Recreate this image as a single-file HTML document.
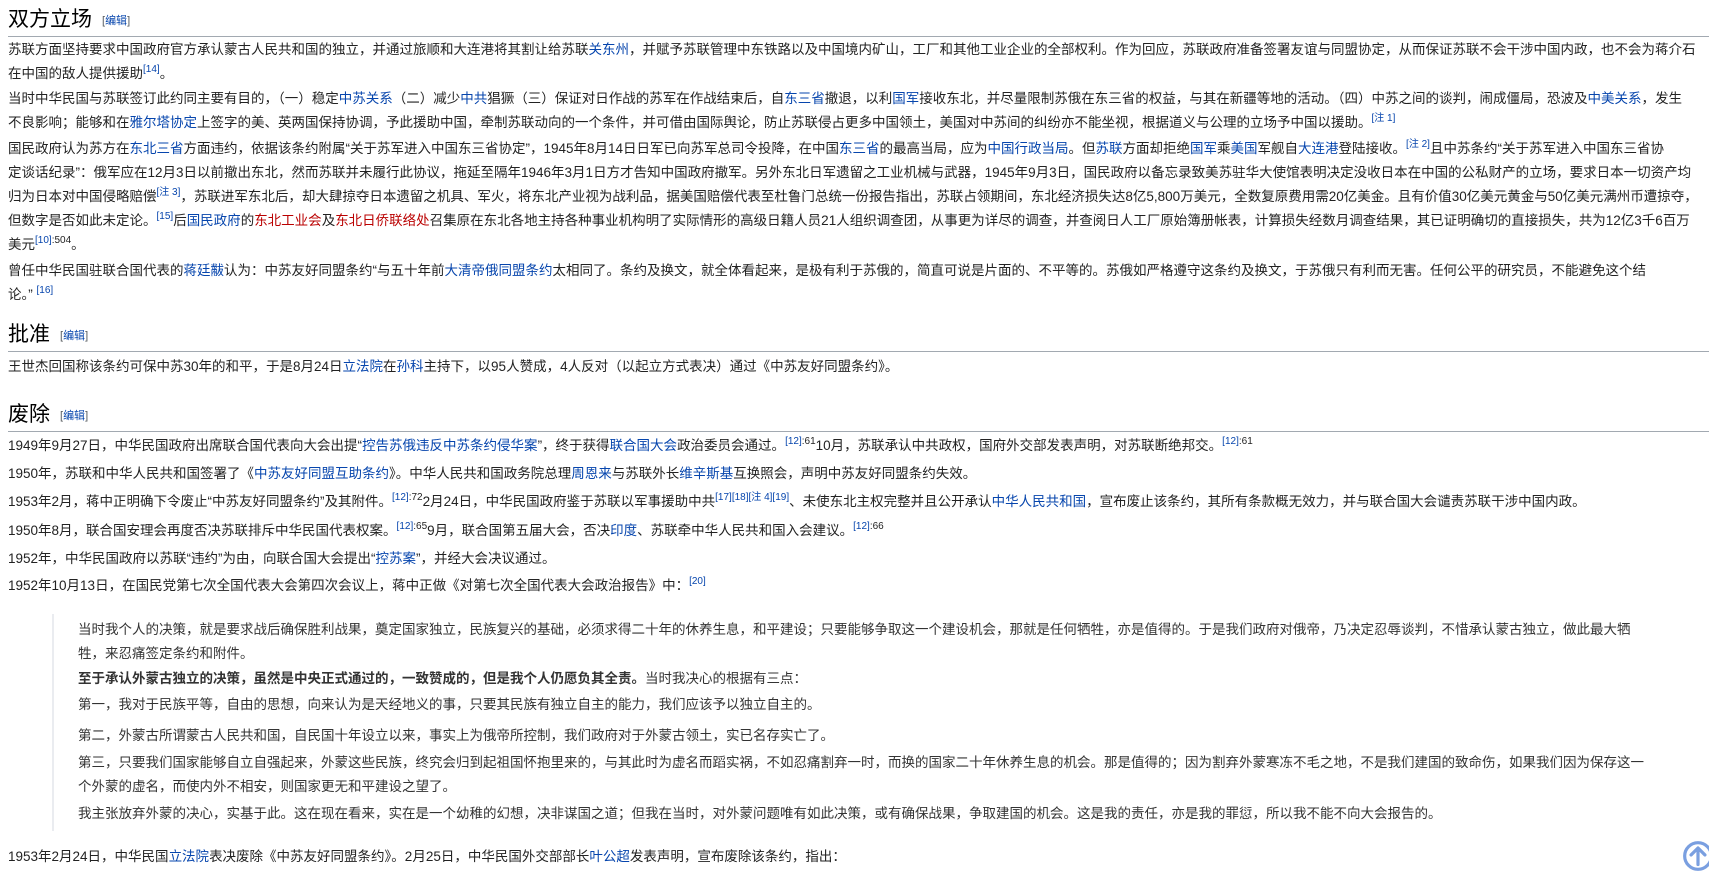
<!DOCTYPE html>
<html><head><meta charset="utf-8">
<style>
html,body{margin:0;padding:0;background:#fff;}
body{width:1709px;height:879px;position:relative;overflow:hidden;font-family:"Liberation Sans","Noto Sans CJK SC",sans-serif;font-size:13.5px;color:#222;}
.l{position:absolute;left:8px;height:24px;line-height:24px;white-space:nowrap;}
.q{left:78px;color:#333;}
a{color:#0645ad;text-decoration:none;}
.r{color:#ba0000;}
sup{font-size:10px;line-height:0;vertical-align:6px;color:#0645ad;}
.h{position:absolute;left:8px;font-size:21px;line-height:26px;color:#000;white-space:nowrap;}
.h .e{font-size:11px;color:#54595d;margin-left:10px;vertical-align:2px;}
.h .e a{color:#0645ad;}
.hr{position:absolute;left:8px;width:1701px;height:1px;background:#a2a9b1;}
.bq{position:absolute;left:52px;top:614px;width:2px;height:217px;background:#eaecf0;}
</style></head><body>

<div class="h" style="top:7px">双方立场<span class="e">[<a>编辑</a>]</span></div>
<div class="hr" style="top:36px"></div>

<div class="l" style="top:38px">苏联方面坚持要求中国政府官方承认蒙古人民共和国的独立，并通过旅顺和大连港将其割让给苏联<a>关东州</a>，并赋予苏联管理中东铁路以及中国境内矿山，工厂和其他工业企业的全部权利。作为回应，苏联政府准备签署友谊与同盟协定，从而保证苏联不会干涉中国内政，也不会为蒋介石</div>
<div class="l" style="top:62px">在中国的敌人提供援助<sup>[14]</sup>。</div>

<div class="l" style="top:87px">当时中华民国与苏联签订此约同主要有目的，（一）稳定<a>中苏关系</a>（二）减少<a>中共</a>猖獗（三）保证对日作战的苏军在作战结束后，自<a>东三省</a>撤退，以利<a>国军</a>接收东北，并尽量限制苏俄在东三省的权益，与其在新疆等地的活动。（四）中苏之间的谈判，闹成僵局，恐波及<a>中美关系</a>，发生</div>
<div class="l" style="top:111px">不良影响；能够和在<a>雅尔塔协定</a>上签字的美、英两国保持协调，予此援助中国，牵制苏联动向的一个条件，并可借由国际舆论，防止苏联侵占更多中国领土，美国对中苏间的纠纷亦不能坐视，根据道义与公理的立场予中国以援助。<sup>[注 1]</sup></div>

<div class="l" style="top:137px">国民政府认为苏方在<a>东北三省</a>方面违约，依据该条约附属“关于苏军进入中国东三省协定”，1945年8月14日日军已向苏军总司令投降，在中国<a>东三省</a>的最高当局，应为<a>中国行政当局</a>。但<a>苏联</a>方面却拒绝<a>国军</a>乘<a>美国</a>军舰自<a>大连港</a>登陆接收。<sup>[注 2]</sup>且中苏条约“关于苏军进入中国东三省协</div>
<div class="l" style="top:161px">定谈话纪录”：俄军应在12月3日以前撤出东北，然而苏联并未履行此协议，拖延至隔年1946年3月1日方才告知中国政府撤军。另外东北日军遗留之工业机械与武器，1945年9月3日，国民政府以备忘录致美苏驻华大使馆表明决定没收日本在中国的公私财产的立场，要求日本一切资产均</div>
<div class="l" style="top:185px">归为日本对中国侵略赔偿<sup>[注 3]</sup>，苏联进军东北后，却大肆掠夺日本遗留之机具、军火，将东北产业视为战利品，据美国赔偿代表至杜鲁门总统一份报告指出，苏联占领期间，东北经济损失达8亿5,800万美元，全数复原费用需20亿美金。且有价值30亿美元黄金与50亿美元满州币遭掠夺，</div>
<div class="l" style="top:209px">但数字是否如此未定论。<sup>[15]</sup>后<a>国民政府</a>的<a class="r">东北工业会</a>及<a class="r">东北日侨联络处</a>召集原在东北各地主持各种事业机构明了实际情形的高级日籍人员21人组织调查团，从事更为详尽的调查，并查阅日人工厂原始簿册帐表，计算损失经数月调查结果，其已证明确切的直接损失，共为12亿3千6百万</div>
<div class="l" style="top:233px">美元<sup>[10]<span style="color:#222">:504</span></sup>。</div>

<div class="l" style="top:259px">曾任中华民国驻联合国代表的<a>蒋廷黻</a>认为：中苏友好同盟条约“与五十年前<a>大清帝俄同盟条约</a>太相同了。条约及换文，就全体看起来，是极有利于苏俄的，简直可说是片面的、不平等的。苏俄如严格遵守这条约及换文，于苏俄只有利而无害。任何公平的研究员，不能避免这个结</div>
<div class="l" style="top:283px">论。” <sup>[16]</sup></div>

<div class="h" style="top:322px">批准<span class="e">[<a>编辑</a>]</span></div>
<div class="hr" style="top:351px"></div>
<div class="l" style="top:355px">王世杰回国称该条约可保中苏30年的和平，于是8月24日<a>立法院</a>在<a>孙科</a>主持下，以95人赞成，4人反对（以起立方式表决）通过《中苏友好同盟条约》。</div>

<div class="h" style="top:402px">废除<span class="e">[<a>编辑</a>]</span></div>
<div class="hr" style="top:431px"></div>
<div class="l" style="top:434px">1949年9月27日，中华民国政府出席联合国代表向大会出提“<a>控告苏俄违反中苏条约侵华案</a>”，终于获得<a>联合国大会</a>政治委员会通过。<sup>[12]<span style="color:#222">:61</span></sup>10月，苏联承认中共政权，国府外交部发表声明，对苏联断绝邦交。<sup>[12]<span style="color:#222">:61</span></sup></div>
<div class="l" style="top:462px">1950年，苏联和中华人民共和国签署了《<a>中苏友好同盟互助条约</a>》。中华人民共和国政务院总理<a>周恩来</a>与苏联外长<a>维辛斯基</a>互换照会，声明中苏友好同盟条约失效。</div>
<div class="l" style="top:490px">1953年2月，蒋中正明确下令废止“中苏友好同盟条约”及其附件。<sup>[12]<span style="color:#222">:72</span></sup>2月24日，中华民国政府鉴于苏联以军事援助中共<sup>[17][18][注 4][19]</sup>、未使东北主权完整并且公开承认<a>中华人民共和国</a>，宣布废止该条约，其所有条款概无效力，并与联合国大会谴责苏联干涉中国内政。</div>
<div class="l" style="top:519px">1950年8月，联合国安理会再度否决苏联排斥中华民国代表权案。<sup>[12]<span style="color:#222">:65</span></sup>9月，联合国第五届大会，否决<a>印度</a>、苏联牵中华人民共和国入会建议。<sup>[12]<span style="color:#222">:66</span></sup></div>
<div class="l" style="top:547px">1952年，中华民国政府以苏联“违约”为由，向联合国大会提出“<a>控苏案</a>”，并经大会决议通过。</div>
<div class="l" style="top:574px">1952年10月13日，在国民党第七次全国代表大会第四次会议上，蒋中正做《对第七次全国代表大会政治报告》中：<sup>[20]</sup></div>

<div class="bq"></div>
<div class="l q" style="top:618px">当时我个人的决策，就是要求战后确保胜利战果，奠定国家独立，民族复兴的基础，必须求得二十年的休养生息，和平建设；只要能够争取这一个建设机会，那就是任何牺牲，亦是值得的。于是我们政府对俄帝，乃决定忍辱谈判，不惜承认蒙古独立，做此最大牺</div>
<div class="l q" style="top:642px">牲，来忍痛签定条约和附件。</div>
<div class="l q" style="top:667px"><b>至于承认外蒙古独立的决策，虽然是中央正式通过的，一致赞成的，但是我个人仍愿负其全责。</b>当时我决心的根据有三点：</div>
<div class="l q" style="top:693px">第一，我对于民族平等，自由的思想，向来认为是天经地义的事，只要其民族有独立自主的能力，我们应该予以独立自主的。</div>
<div class="l q" style="top:724px">第二，外蒙古所谓蒙古人民共和国，自民国十年设立以来，事实上为俄帝所控制，我们政府对于外蒙古领土，实已名存实亡了。</div>
<div class="l q" style="top:751px">第三，只要我们国家能够自立自强起来，外蒙这些民族，终究会归到起祖国怀抱里来的，与其此时为虚名而蹈实祸，不如忍痛割弃一时，而换的国家二十年休养生息的机会。那是值得的；因为割弃外蒙寒冻不毛之地，不是我们建国的致命伤，如果我们因为保存这一</div>
<div class="l q" style="top:775px">个外蒙的虚名，而使内外不相安，则国家更无和平建设之望了。</div>
<div class="l q" style="top:802px">我主张放弃外蒙的决心，实基于此。这在现在看来，实在是一个幼稚的幻想，决非谋国之道；但我在当时，对外蒙问题唯有如此决策，或有确保战果，争取建国的机会。这是我的责任，亦是我的罪愆，所以我不能不向大会报告的。</div>

<div class="l" style="top:845px">1953年2月24日，中华民国<a>立法院</a>表决废除《中苏友好同盟条约》。2月25日，中华民国外交部部长<a>叶公超</a>发表声明，宣布废除该条约，指出：</div>

<svg style="position:absolute;left:1682px;top:840px" width="32" height="32" viewBox="0 0 30 30">
<circle cx="15" cy="15" r="12.5" fill="none" stroke="#7a9fe0" stroke-width="3"/>
<path d="M15 23 V8 M8.5 14 L15 7.5 L21.5 14" fill="none" stroke="#7a9fe0" stroke-width="3" stroke-linecap="round" stroke-linejoin="round"/>
</svg>
</body></html>
